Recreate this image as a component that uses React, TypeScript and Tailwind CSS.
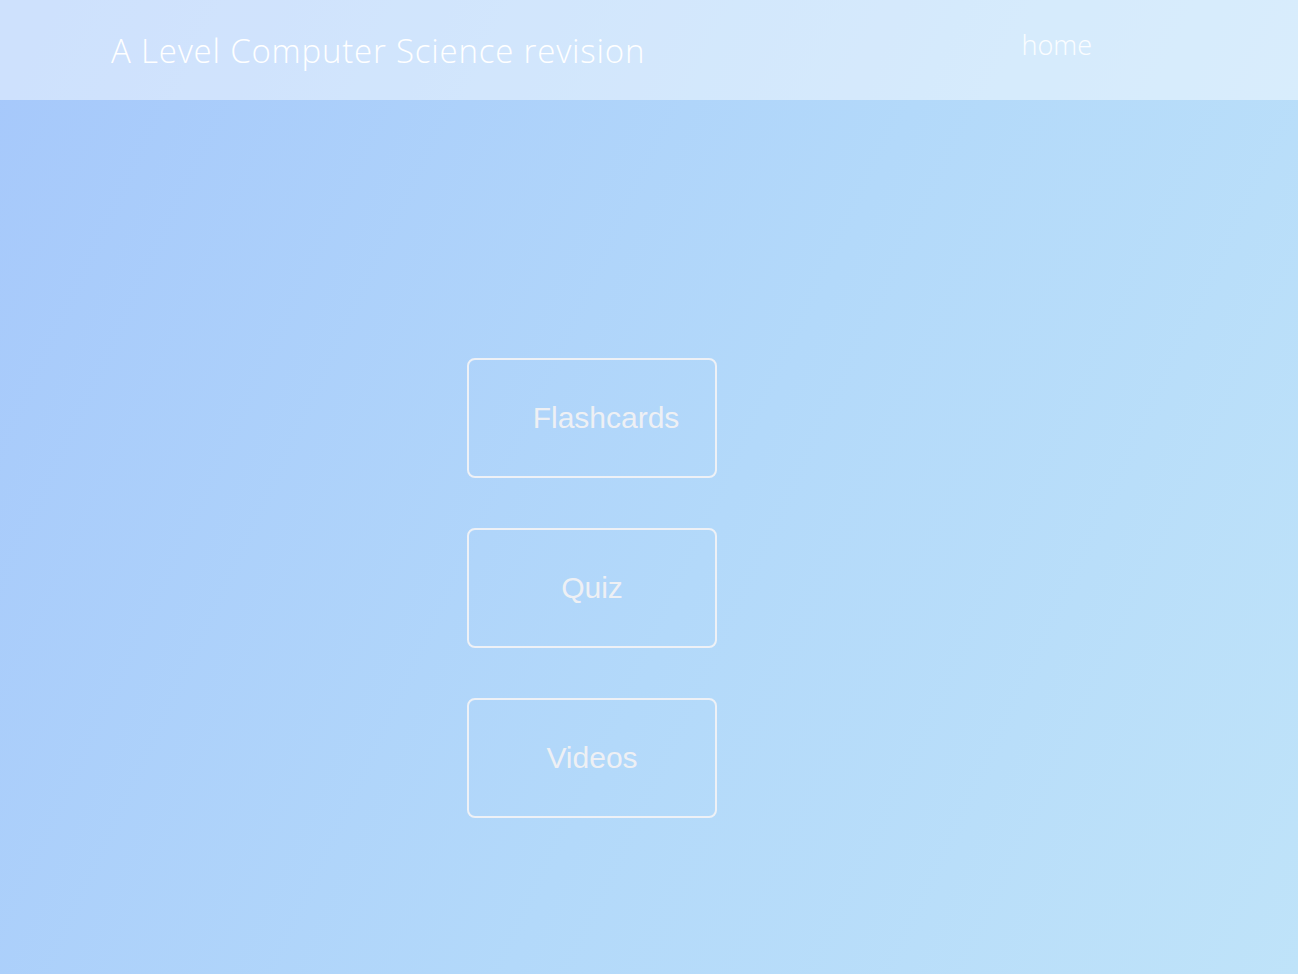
export default function App() {
  return (
    <div className="flex min-h-[974px] flex-col bg-[linear-gradient(115deg,#a6c8fb_0%,#b3d9fa_55%,#bfe3f9_100%)]">
      <header className="flex h-[100px] items-start justify-between bg-white/45 pl-[111px] pr-[206px]">
        <h1 className="mt-[26px] font-['Open_Sans',sans-serif] text-[33px] font-light tracking-[0.8px] text-white">
          A Level Computer Science revision
        </h1>
        <a href="#" className="mt-[25px] font-['Open_Sans',sans-serif] text-[27px] font-light text-white/90">
          home
        </a>
      </header>

      <main className="flex flex-col items-center gap-[50px] pt-[258px] pr-[114px] font-['Liberation_Sans',Arial,sans-serif]">
        <a href="#" className="flex h-[120px] w-[250px] items-center justify-center rounded-lg border-2 border-[#eef1f6] pb-[2px] pl-7 text-[30px] text-[#eef0f4]">
          Flashcards
        </a>
        <a href="#" className="flex h-[120px] w-[250px] items-center justify-center rounded-lg border-2 border-[#eef1f6] pb-[2px] text-[30px] text-[#eef0f4]">
          Quiz
        </a>
        <a href="#" className="flex h-[120px] w-[250px] items-center justify-center rounded-lg border-2 border-[#eef1f6] pb-[2px] text-[30px] text-[#eef0f4]">
          Videos
        </a>
      </main>
    </div>
  );
}
